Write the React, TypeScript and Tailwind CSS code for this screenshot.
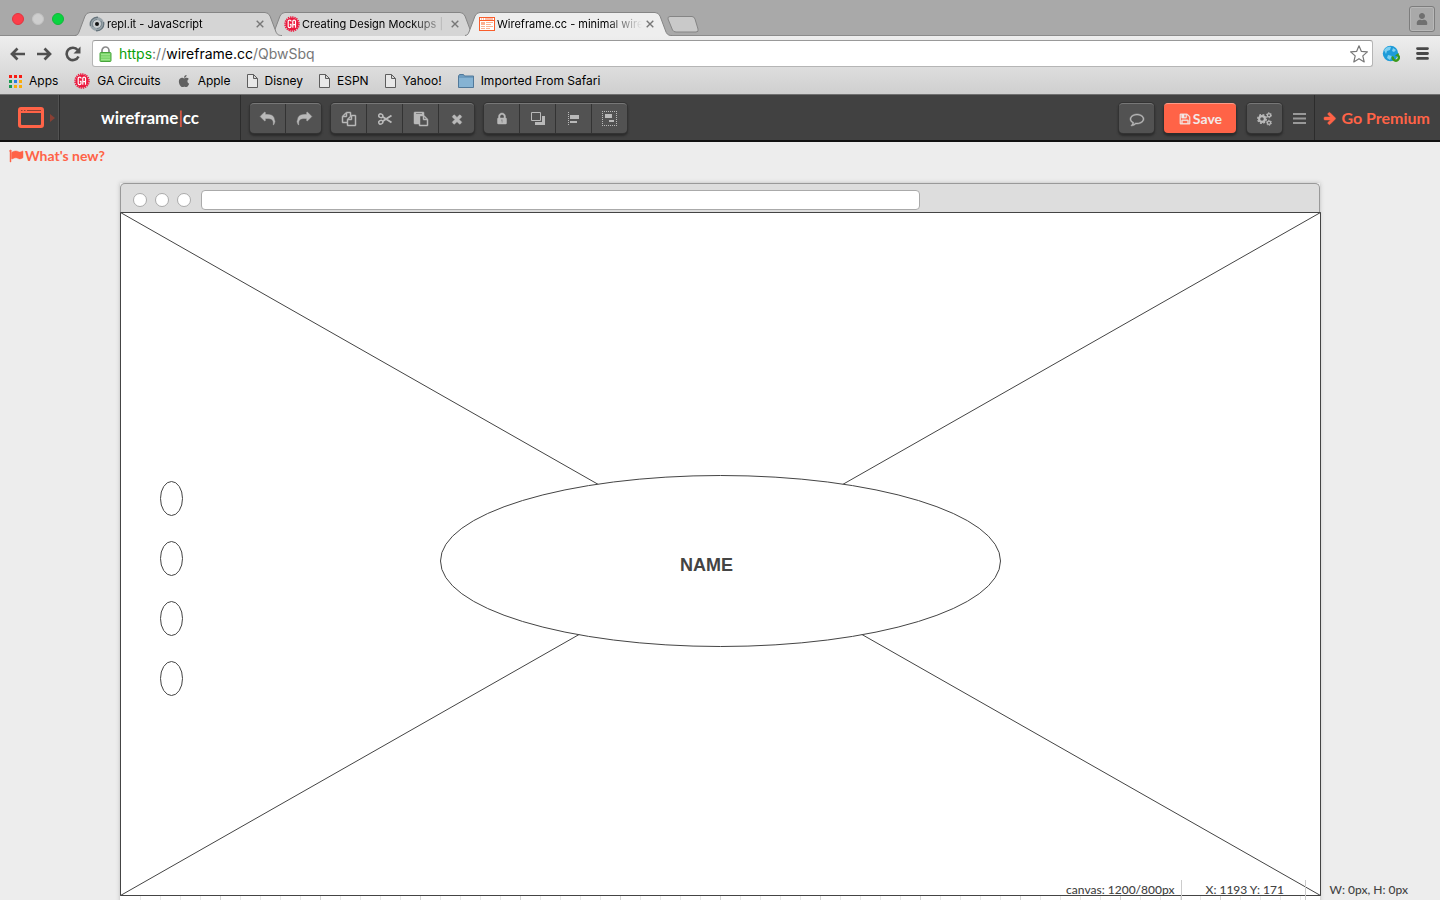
import type { ReactNode } from "react";
import { FaApple, FaUser } from "react-icons/fa";

const PATHS = {
  copy: "M1696 384q40 0 68 28t28 68v1216q0 40-28 68t-68 28h-960q-40 0-68-28t-28-68v-288h-544q-40 0-68-28t-28-68v-672q0-40 20-88t48-76l408-408q28-28 76-48t88-20h416q40 0 68 28t28 68v328q68-40 128-40h416zm-544 213l-299 299h299v-299zm-640-384l-299 299h299v-299zm196 647l316-316v-416h-384v416q0 40-28 68t-68 28h-416v640h512v-256q0-40 20-88t48-76zm956 804v-1152h-384v416q0 40-28 68t-68 28h-416v640h896z",
  paste:
    "M768 1664h896v-640h-416q-40 0-68-28t-28-68v-416h-384v1152zm256-1440v-64q0-13-9.5-22.5t-22.5-9.5h-704q-13 0-22.5 9.5t-9.5 22.5v64q0 13 9.5 22.5t22.5 9.5h704q13 0 22.5-9.5t9.5-22.5zm256 672h299l-299-299v299zm512 128v672q0 40-28 68t-68 28h-960q-40 0-68-28t-28-68v-160h-544q-40 0-68-28t-28-68v-1344q0-40 28-68t68-28h1088q40 0 68 28t28 68v328q21 13 36 28l408 408q28 28 48 76t20 88z",
  save: "M512 1536h768v-384h-768v384zm896 0h128v-896q0-14-10-38.5t-20-34.5l-281-281q-10-10-34-20t-39-10v416q0 40-28 68t-68 28h-576q-40 0-68-28t-28-68v-416h-128v1280h128v-416q0-40 28-68t68-28h832q40 0 68 28t28 68v416zm-384-928v-320q0-13-9.5-22.5t-22.5-9.5h-192q-13 0-22.5 9.5t-9.5 22.5v320q0 13 9.5 22.5t22.5 9.5h192q13 0 22.5-9.5t9.5-22.5zm640 32v928q0 40-28 68t-68 28h-1344q-40 0-68-28t-28-68v-1344q0-40 28-68t68-28h928q40 0 88 20t76 48l280 280q28 28 48 76t20 88z",
  reply:
    "M1792 1120q0 166-127 451-3 7-10.5 24t-13.5 30-13 22q-12 17-28 17-15 0-23.5-10t-8.5-25q0-9 2.5-26.5t2.5-23.5q5-68 5-123 0-112-19.5-200.5t-54-153.5-89-112-117-79.5-145.5-47.5-176.5-24-200.5-7h-224v256q0 26-19 45t-45 19-45-19l-512-512q-19-19-19-45t19-45l512-512q19-19 45-19t45 19 19 45v256h224q713 0 875 403 53 134 53 333z",
  arrow:
    "M1600 960q0 54-37 91l-651 651q-39 37-91 37-51 0-90-37l-75-75q-38-38-38-91t38-91l293-293h-704q-52 0-84.5-37.5t-32.5-90.5v-128q0-53 32.5-90.5t84.5-37.5h704l-293-294q-38-36-38-90t38-90l75-75q38-38 90-38 53 0 91 38l651 651q37 35 37 90z",
  lock: "M640 768h512v-192q0-106-75-181t-181-75-181 75-75 181v192zm832 96v576q0 40-28 68t-68 28h-960q-40 0-68-28t-28-68v-576q0-40 28-68t68-28h32v-192q0-184 132-316t316-132 316 132 132 316v192h32q40 0 68 28t28 68zM800 960v160h64v220h96v-380z",
  times:
    "M1490 1322q0 40-28 68l-136 136q-28 28-68 28t-68-28l-294-294-294 294q-28 28-68 28t-68-28l-136-136q-28-28-28-68t28-68l294-294-294-294q-28-28-28-68t28-68l136-136q28-28 68-28t68 28l294 294 294-294q28-28 68-28t68 28l136 136q28 28 28 68t-28 68l-294 294 294 294q28 28 28 68z",
  comment:
    "M896 384q-204 0-381.5 69.5t-282 187.5-104.5 255q0 112 71.5 213.5t201.5 175.5l87 50-27 96q-24 91-70 172 152-63 275-171l43-38 57 6q69 8 130 8 204 0 381.5-69.5t282-187.5 104.5-255-104.5-255-282-187.5-381.5-69.5zm896 512q0 174-120 321.5t-326 233-450 85.5q-70 0-145-8-198 175-460 242-49 14-114 22h-5q-15 0-27-10.5t-16-27.5v-1q-3-4-.5-12t2-10 4.5-9.5l6-9 7-8.5 8-9q7-8 31-34.5t34.5-38 31-39.5 32.5-51 27-59 26-76q-157-89-247.5-220t-90.5-281q0-174 120-321.5t326-233 450-85.5 450 85.5 326 233 120 321.5z",
  flag: "M320 256q0 72-64 110v1266q0 13-9.5 22.5t-22.5 9.5h-64q-13 0-22.5-9.5t-9.5-22.5v-1266q-64-38-64-110 0-53 37.5-90.5t90.5-37.5 90.5 37.5 37.5 90.5zm1472 64v763q0 25-12.5 38.5t-39.5 27.5q-215 116-369 116-61 0-123.5-22t-108.5-48-115.5-48-142.5-22q-192 0-464 146-17 9-33 9-26 0-45-19t-19-45v-742q0-32 31-55 21-14 79-43 236-120 421-120 107 0 200 29t219 88q38 19 88 19 54 0 117.500-21t110-47 88-47 54.500-21q26 0 45 19t19 45z",
};

function Glyph({ name, className = "size-3.5" }: { name: keyof typeof PATHS; className?: string }) {
  return (
    <svg
      viewBox="0 0 1792 1792"
      className={`overflow-visible ${className}`}
      fill="currentColor"
      fillRule="evenodd"
      stroke="currentColor"
      strokeWidth="60"
      aria-hidden="true"
    >
      <path d={PATHS[name]} />
    </svg>
  );
}

function CogsIcon() {
  return (
    <svg viewBox="0 0 15 14" className="h-3.5 w-[15px]" fill="none" stroke="currentColor" aria-hidden="true">
      <circle cx="5" cy="7" r="2.900" strokeWidth="2.200" />
      <circle cx="5" cy="7" r="4.300" strokeWidth="1.400" strokeDasharray="1.900 1.477" />
      <circle cx="12" cy="3.200" r="1.600" strokeWidth="1.300" />
      <circle cx="12" cy="3.200" r="2.500" strokeWidth="1" strokeDasharray="1.400 1.218" />
      <circle cx="12" cy="10.800" r="1.600" strokeWidth="1.300" />
      <circle cx="12" cy="10.800" r="2.500" strokeWidth="1" strokeDasharray="1.400 1.218" />
    </svg>
  );
}

function GaIcon() {
  return (
    <svg viewBox="0 0 16 16" className="size-4 shrink-0" aria-hidden="true">
      <circle cx="8" cy="8" r="6.600" fill="#ec1a3f" />
      <circle cx="8" cy="8" r="7" fill="none" stroke="#ec1a3f" strokeWidth="1.600" strokeDasharray="1.300 .9" />
      <path
        d="M7 5.400V5c0-1.200-2.800-1.200-2.800 0v5.600c0 1.300 2.800 1.300 2.800 0V8.300H5.800M8.800 11.800V5.200c0-1.500 2.700-1.500 2.700 0v6.600M8.800 8.700h2.700"
        fill="none"
        stroke="#fff"
        strokeWidth="1.200"
      />
    </svg>
  );
}

function ReplIcon() {
  return (
    <svg viewBox="0 0 16 16" className="size-4 shrink-0" fill="none" aria-hidden="true">
      <circle cx="8" cy="8" r="5.400" stroke="#9aa5ab" strokeWidth="3.400" />
      <path d="M1.500 10A7 7 0 0 1 9 1.300M14.500 6A7 7 0 0 1 7 14.700" stroke="#66747c" strokeWidth="1.300" />
      <path d="M4 11A5 5 0 0 1 8 3.500M12 5A5 5 0 0 1 8 12.500" stroke="#76848c" />
      <circle cx="8" cy="8" r="3.400" fill="#c9ced1" />
      <circle cx="8" cy="8" r="2" fill="#111" />
    </svg>
  );
}

function WireIcon() {
  return (
    <svg viewBox="0 0 16 14" className="h-3.5 w-4 shrink-0" fill="none" aria-hidden="true">
      <rect x=".5" y=".5" width="15" height="13" fill="#fff" stroke="#f95d2b" />
      <path d="M0 3.500h16" stroke="#f95d2b" />
      <path d="M2 2h1M4 2h1M6 2h8" stroke="#f95d2b" strokeWidth=".8" />
      <path d="M2 5h4v3H2z" fill="#fbb193" />
      <path d="M7 5.500h7M7 7.500h5M2 9.500h4M7 9.500h7M2 11.500h4M7 11.500h4" stroke="#fbb193" />
    </svg>
  );
}

function PageIcon() {
  return (
    <svg viewBox="0 0 11 14" className="h-3.5 w-[11px]" fill="#e8e8e8" stroke="#5d5d5d" aria-hidden="true">
      <path d="M.5.5h6l4 4v9H.5zM6.500.5v4h4" />
    </svg>
  );
}

function CloseIcon() {
  return (
    <svg viewBox="0 0 8 8" className="size-2" stroke="#777" strokeWidth="1.400" aria-hidden="true">
      <path d="M.7.7l6.600 6.600M7.300.7L.7 7.300" />
    </svg>
  );
}

function Tab({ icon, title, active = false, layer }: { icon: ReactNode; title: string; active?: boolean; layer: string }) {
  const fill = active ? "#eeeeee" : "#d5d5d5";
  return (
    <div className={`relative -mr-[13px] h-6 w-[208px] ${layer}`}>
      <svg viewBox="0 0 208 24" preserveAspectRatio="none" className="absolute inset-0 size-full" aria-hidden="true">
        <path
          d="M0 24C3 23 3 22 4 20L10 4Q11.500.5 15 .5H190Q193.500.5 195 4L201 20C202 22 203 23.500 207 24Z"
          fill={fill}
        />
        <path
          d="M0 23.500C3 23 3 22 4 20L10 4Q11.500.5 15 .5H190Q193.500.5 195 4L201 20C202 22 203 23.500 207 23.500"
          fill="none"
          stroke="#858585"
        />
      </svg>
      <div className="relative flex h-full items-center justify-between pr-[19px] pl-3.5">
        <button type="button" className="flex items-center gap-0.5">
          {icon}
          <span className="w-[145px] bg-linear-to-r from-black from-75% to-transparent bg-clip-text text-left text-[11px] leading-6 whitespace-nowrap text-transparent">
            {title}
          </span>
        </button>
        <button type="button" aria-label={`Close ${title}`}>
          <CloseIcon />
        </button>
      </div>
    </div>
  );
}

function Bookmark({ icon, children }: { icon: ReactNode; children: string }) {
  return (
    <a href="#" className="flex items-center gap-[7px]">
      {icon}
      <span>{children}</span>
    </a>
  );
}

const GROUP =
  "flex h-[30px] divide-x divide-[#333] overflow-hidden rounded-[4px] border-t border-[#777] bg-[#525252] text-[#b9b9b9] shadow-[0_0_0_1px_#333,0_2px_2px_1px_#2c2c2c]";

function Tool({ label, children }: { label: string; children: ReactNode }) {
  return (
    <button type="button" aria-label={label} className="flex w-9 items-center justify-center last:w-[35px]">
      {children}
    </button>
  );
}

function BrowserChrome() {
  return (
    <div className="shrink-0 font-['Inter',sans-serif] text-black">
      <div className="flex h-9 items-end border-b border-[#8b8b8b] bg-[#a9a9a9]">
        <div className="flex h-full w-[75px] items-center gap-2 pt-0.5 pl-3">
          <button type="button" aria-label="Close window" className="size-3 rounded-full border border-[#e0353f] bg-[#fc3d49]" />
          <button type="button" aria-label="Minimize window" className="size-3 rounded-full border border-[#c2c2c2] bg-[#cecece]" />
          <button type="button" aria-label="Zoom window" className="size-3 rounded-full border border-[#13b739] bg-[#09d440]" />
        </div>
        <nav aria-label="Tabs" className="-mb-px flex">
          <Tab layer="z-20" icon={<ReplIcon />} title="repl.it - JavaScript" />
          <Tab layer="z-10" icon={<GaIcon />} title="Creating Design Mockups |" />
          <Tab layer="z-30" icon={<WireIcon />} title="Wireframe.cc - minimal wire" active />
        </nav>
        <button type="button" aria-label="New tab" className="mb-0.5 ml-[7px]">
          <svg viewBox="0 0 32 17" className="h-[17px] w-8" fill="#c9c9c9" stroke="#858585" aria-hidden="true">
            <path d="M3 .5H25Q27 .5 28 3L31 13Q32 16 29 16H9Q6.500 16 5.500 14L1 3Q.5.5 3 .5Z" />
          </svg>
        </button>
        <button
          type="button"
          aria-label="Profile"
          className="mr-[5px] mb-[3px] ml-auto flex size-[26px] items-center justify-center rounded-[3px] border border-[#7d7d7d] text-[#707070] shadow-[inset_0_0_0_1px_#b8b8b8]"
        >
          <FaUser className="size-3" />
        </button>
      </div>
      <div className="border-b border-[#707070] bg-linear-to-b from-[#eeeeee] to-[#cfcfcf]">
        <div className="flex items-center pt-1">
          <div className="flex w-[92px] items-center gap-3 pl-[9px] text-[#505050]">
            <button type="button" aria-label="Back">
              <svg viewBox="0 0 16 16" className="size-4" fill="none" stroke="currentColor" strokeWidth="2.700" aria-hidden="true">
                <path d="M16 8H3M8.500 2.500L3 8l5.500 5.500" />
              </svg>
            </button>
            <button type="button" aria-label="Forward">
              <svg viewBox="0 0 16 16" className="size-4" fill="none" stroke="currentColor" strokeWidth="2.700" aria-hidden="true">
                <path d="M0 8h13M7.500 2.500L13 8l-5.500 5.500" />
              </svg>
            </button>
            <button type="button" aria-label="Reload">
              <svg viewBox="0 0 16 16" className="size-4" fill="none" stroke="currentColor" strokeWidth="2.600" aria-hidden="true">
                <path d="M13.500 10.500A6.200 6.200 0 1 1 12.700 4" />
                <path d="M15.500 .5v7H8.500z" fill="currentColor" stroke="none" />
              </svg>
            </button>
          </div>
          <div className="flex h-[27px] min-w-0 flex-1 items-center rounded-[3px] border border-[#b5b5b5] border-t-[#999] bg-white pr-1 pl-1.5">
            <svg viewBox="0 0 13 16" className="h-4 w-[13px]" aria-hidden="true">
              <path d="M3 8V4.500a3.500 3.500 0 0 1 7 0V8" fill="none" stroke="#8b8b8b" strokeWidth="1.700" />
              <rect x="1" y="6.500" width="11" height="9" rx=".8" fill="#7ed56d" stroke="#48a43c" />
              <path d="M2 8.500h9M2 11h9M2 13.500h9" stroke="#a5e894" strokeWidth=".8" />
            </svg>
            <a href="#" className="ml-[7px] flex-1 text-sm leading-5 whitespace-nowrap text-[#777]">
              <span className="text-[#0ba00b]">https</span>://<span className="text-black">wireframe.cc</span>/QbwSbq
            </a>
            <button type="button" aria-label="Bookmark this page">
              <svg viewBox="0 0 18 18" className="size-[18px]" fill="#fff" stroke="#777" strokeWidth="1.200" strokeLinejoin="round" aria-hidden="true">
                <path d="M9 .8l2.400 5.600 6 .5-4.600 4 1.400 6L9 13.700l-5.200 3.200 1.400-6-4.600-4 6-.5z" />
              </svg>
            </button>
          </div>
          <div className="flex items-center gap-4 pr-[11px] pl-[9px]">
            <button type="button" aria-label="Web extension">
              <svg viewBox="0 0 18 18" className="size-[18px]" aria-hidden="true">
                <circle cx="8.500" cy="8.500" r="7.700" fill="#1e9bd8" />
                <path d="M2 5q3-4 7-3l-1 3-3 1-1 3zM11 3l3 2-2 2-2-1zM6 10l4 1-2 4-3-2z" fill="#7fd0f1" />
                <path d="M11 11.500a3 3 0 1 0 5-1" fill="none" stroke="#3c9a1c" strokeWidth="2.400" />
                <path d="M13 10.500l3.500-2.500 1 4z" fill="#3c9a1c" />
              </svg>
            </button>
            <button type="button" aria-label="Menu">
              <svg viewBox="0 0 13 13" className="size-[13px]" stroke="#484848" strokeWidth="2.800" strokeLinecap="round" aria-hidden="true">
                <path d="M1.500 1.600h10M1.500 6.500h10M1.500 11.400h10" />
              </svg>
            </button>
          </div>
        </div>
        <nav aria-label="Bookmarks" className="flex h-[27px] items-center gap-4 pt-px pl-[9px] text-xs">
          <Bookmark
            icon={
              <svg viewBox="0 0 13 13" className="size-[13px]" aria-hidden="true">
                <path d="M0 0h3v3H0zM5 0h3v3H5zM10 0h3v3h-3z" fill="#f81b12" />
                <path d="M0 5h3v3H0zM0 10h3v3H0z" fill="#1a9b50" />
                <path d="M5 5h3v3H5z" fill="#2a7de1" />
                <path d="M10 5h3v3h-3zM5 10h3v3H5zM10 10h3v3h-3z" fill="#fbac09" />
              </svg>
            }
          >
            Apps
          </Bookmark>
          <Bookmark icon={<GaIcon />}>GA Circuits</Bookmark>
          <Bookmark icon={<FaApple className="size-3.5 text-[#606060]" />}>Apple</Bookmark>
          <Bookmark icon={<PageIcon />}>Disney</Bookmark>
          <Bookmark icon={<PageIcon />}>ESPN</Bookmark>
          <Bookmark icon={<PageIcon />}>Yahoo!</Bookmark>
          <Bookmark
            icon={
              <svg viewBox="0 0 16 14" className="h-3.5 w-4" aria-hidden="true">
                <path d="M.5 13.500V2l1-1.500h4l1 1.500h9v11.500z" fill="#6d9cc0" stroke="#51799a" />
                <path d="M1 4h14v9H1z" fill="#86b3d3" />
              </svg>
            }
          >
            Imported From Safari
          </Bookmark>
        </nav>
      </div>
    </div>
  );
}

function AppHeader() {
  return (
    <header className="flex h-[47px] shrink-0 items-stretch border-b-2 border-[#111] bg-[#414141]">
      <button type="button" aria-label="Templates" className="flex w-[60px] items-center gap-1.5 border-r border-[#2c2c2c] pl-[18px] shadow-[inset_-1px_0_#525252]">
        <svg viewBox="0 0 26 21" className="h-[21px] w-[26px]" aria-hidden="true">
          <path fillRule="evenodd" d="M3 0h20q3 0 3 3v15q0 3-3 3H3q-3 0-3-3V3q0-3 3-3zM3 6v11q0 1 1 1h18q1 0 1-1V6z" fill="#ff6347" />
          <path d="M3 3.500h1.500M6 3.500h1.500M9 3.500h14" stroke="#8b4034" />
        </svg>
        <svg viewBox="0 0 5 8" className="h-2 w-[5px]" aria-hidden="true">
          <path d="M0 0l5 4-5 4z" fill="#8b4034" />
        </svg>
      </button>
      <div className="flex w-[181px] items-center justify-center border-r border-[#2c2c2c]">
        <a href="#" className="text-[17px] leading-6 font-bold text-white">
          wireframe<span className="font-normal text-[#ff6347]">|</span>cc
        </a>
      </div>
      <div className="flex items-start gap-2.5 pt-2 pl-[9px]">
        <div className={GROUP}>
          <Tool label="Undo"><Glyph name="reply" /></Tool>
          <Tool label="Redo"><Glyph name="reply" className="size-3.5 -scale-x-100" /></Tool>
        </div>
        <div className={GROUP}>
          <Tool label="Copy"><Glyph name="copy" /></Tool>
          <Tool label="Cut">
            <svg viewBox="0 0 14 12" className="h-3 w-3.5" fill="none" stroke="currentColor" strokeWidth="1.500" aria-hidden="true">
              <ellipse cx="2.800" cy="2.800" rx="2.100" ry="1.800" transform="rotate(25 2.800 2.800)" />
              <ellipse cx="2.800" cy="9.200" rx="2.100" ry="1.800" transform="rotate(-25 2.800 9.200)" />
              <path d="M4.600 3.800L13.500 9.500M4.600 8.200L13.500 2.500" strokeWidth="1.900" />
            </svg>
          </Tool>
          <Tool label="Paste"><Glyph name="paste" /></Tool>
          <Tool label="Delete"><Glyph name="times" /></Tool>
        </div>
        <div className={GROUP}>
          <Tool label="Lock"><Glyph name="lock" /></Tool>
          <Tool label="Arrange">
            <svg viewBox="0 0 14 13" className="h-[13px] w-3.5" aria-hidden="true">
              <path d="M.5.5h9v8h-9z" fill="none" stroke="currentColor" />
              <path d="M11 4h3v9H4v-3h7z" fill="currentColor" />
            </svg>
          </Tool>
          <Tool label="Align">
            <svg viewBox="0 0 12 14" className="h-3.5 w-3" fill="currentColor" aria-hidden="true">
              <path d="M.5 0v14" stroke="currentColor" strokeDasharray="1 1" />
              <path d="M2 3h9v4H2zM2 9h7v2H2z" />
            </svg>
          </Tool>
          <Tool label="Group">
            <svg viewBox="0 0 15 15" className="size-[15px]" fill="currentColor" aria-hidden="true">
              <path d="M0 .5h15M0 14.500h15M.5 0v15M14.500 0v15" stroke="currentColor" strokeDasharray="1 1" />
              <path d="M3 3h7v4H3zM7 9h5v2H7z" />
            </svg>
          </Tool>
        </div>
      </div>
      <div className="ml-auto flex items-start pt-2">
        <div className={GROUP}>
          <Tool label="Comments"><Glyph name="comment" /></Tool>
        </div>
        <button
          type="button"
          className="ml-2.5 flex h-[30px] w-[72px] items-center justify-center gap-0.5 rounded-[4px] border-t border-[#ff9a87] bg-[#ff6347] text-sm font-bold text-[#f3e9e7] shadow-[0_2px_2px_1px_#2c2c2c]"
        >
          <Glyph name="save" className="size-3" />
          Save
        </button>
        <div className={`${GROUP} ml-[11px]`}>
          <Tool label="Settings"><CogsIcon /></Tool>
        </div>
        <button type="button" aria-label="Menu" className="ml-[11px] flex h-[30px] items-center text-[#999]">
          <svg viewBox="0 0 13 11" className="h-[11px] w-[13px]" stroke="currentColor" strokeWidth="2" aria-hidden="true">
            <path d="M0 1h13M0 5.500h13M0 10h13" />
          </svg>
        </button>
      </div>
      <a href="#" className="ml-2 flex items-center gap-1 border-l border-[#2c2c2c] pr-2.5 pl-2 text-base font-bold text-[#ff6347]">
        <Glyph name="arrow" className="size-3.5" />
        Go Premium
      </a>
    </header>
  );
}

const DOTS = [286, 346, 406, 466];
const TICKS = Array.from({ length: 59 }, (_, i) => (i + 1) * 20);

function Canvas() {
  return (
    <main className="mx-auto mt-[41px] w-5/6 shadow-[0_0_4px_#bbb]">
      <div className="flex h-[29px] items-center gap-2 rounded-t-[5px] border border-b-0 border-[#999] bg-[#ddd] pt-1">
        <span className="ml-3 size-3.5 rounded-full border border-[#aaa] bg-white" />
        <span className="size-3.5 rounded-full border border-[#aaa] bg-white" />
        <span className="size-3.5 rounded-full border border-[#aaa] bg-white" />
        <span className="ml-0.5 h-5 w-3/5 rounded-[4px] border border-[#aaa] bg-white" />
      </div>
      <div className="relative bg-white">
        <svg viewBox="0 0 1200 800" className="block w-full overflow-visible" fill="#fff" stroke="#444" aria-label="Wireframe drawing">
          <path d="M.5.5h1200v683H.5zM.5.5l1200 683M1200.500.5L.5 683.500" />
          <ellipse cx="600.500" cy="349" rx="280" ry="85.500" />
          {DOTS.map((y) => (
            <ellipse key={y} cx="51.500" cy={y + 0.5} rx="11" ry="17" />
          ))}
          {TICKS.map((x) => (
            <path key={x} d={`M${x + 0.5} 684v116`} stroke={x % 100 === 0 ? "#d4d4d4" : "#e9e9e9"} />
          ))}
        </svg>
        <p className="absolute top-[341px] left-[560px] font-['Liberation_Sans',Arial,sans-serif] text-lg leading-6 font-bold text-[#444]">
          NAME
        </p>
      </div>
    </main>
  );
}

export default function App() {
  return (
    <div className="relative flex h-screen flex-col overflow-hidden bg-[#ededed] font-['Lato',sans-serif]">
      <BrowserChrome />
      <AppHeader />
      <div className="relative min-h-0 flex-1 overflow-hidden">
        <a href="#" className="absolute top-1 left-[9px] flex items-center gap-0.5 text-sm leading-5 font-bold text-[#ff6347]">
          <Glyph name="flag" className="size-3.5" />
          What's new?
        </a>
        <Canvas />
      </div>
      <footer className="absolute right-8 bottom-0 flex items-start text-xs leading-5 font-medium text-[#444]">
        <span className="border-r border-[#ccc] pr-1.5">canvas: 1200/800px</span>
        <span className="w-[124px] border-r border-[#ccc] pl-6">X: 1193 Y: 171</span>
        <span className="pl-6">W: 0px, H: 0px</span>
      </footer>
    </div>
  );
}
